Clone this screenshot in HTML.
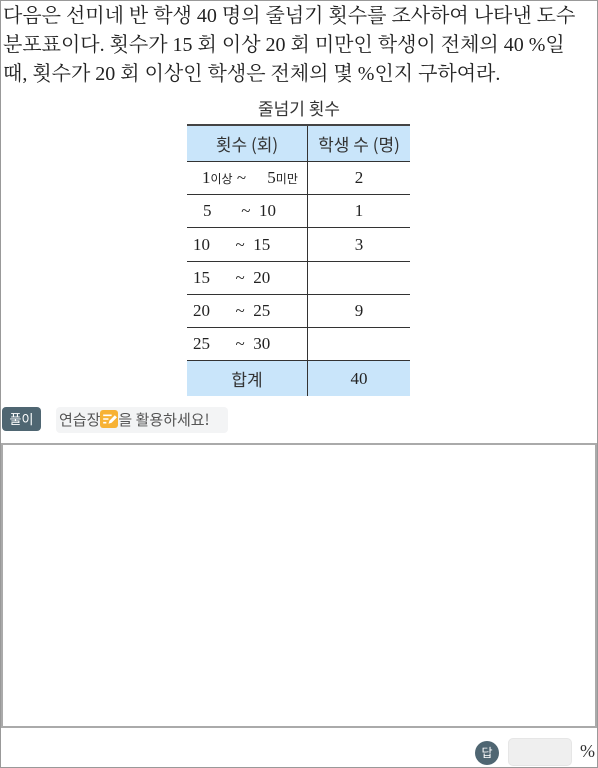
<!DOCTYPE html>
<html><head><meta charset="utf-8"><style>
*{margin:0;padding:0;box-sizing:border-box}
body{width:598px;height:768px;position:relative;background:#fff;font-family:"Liberation Serif","Noto Serif CJK SC","Noto Sans CJK KR",serif;color:#222;overflow:hidden}
.frame{position:absolute;left:0;top:0;width:598px;height:768px;border:1px solid #999}
.q{position:absolute;left:3px;top:2px;font-size:20px;line-height:29px;white-space:nowrap;letter-spacing:0px}
.cap{position:absolute;left:0;width:598px;top:95px;text-align:center;font-size:17px;font-family:"Noto Sans CJK KR",sans-serif;color:#333}
.t{position:absolute;left:187px;top:124px;width:223px;height:272px;border-top:2px solid #444;border-bottom:2px solid #444}
.r{position:absolute;left:0;width:223px;border-bottom:1px solid #333;font-size:17px}
.c1,.c2{position:absolute;top:0;height:100%;display:flex;align-items:center}
.c1{left:0;width:121px;border-right:1px solid #333}
.c2{left:121px;width:102px;justify-content:center}
.blue{background:#c9e5fa}
.k{font-family:"Noto Sans CJK KR",sans-serif;color:#333}
sup{font-family:"Noto Sans CJK KR",sans-serif;font-size:12px;vertical-align:6px}
.tag{position:absolute;left:2px;top:407px;width:39px;height:24px;background:#4f6672;color:#fff;border-radius:4px;font:13px "Noto Sans CJK KR",sans-serif;text-align:center;line-height:24px}
.tip{position:absolute;left:56px;top:407px;width:172px;height:26px;background:#f3f4f5;border-radius:4px;font:15px "Noto Sans CJK KR",sans-serif;color:#555;line-height:26px;padding-left:3px;white-space:nowrap}
.ic{display:inline-block;width:18px;height:18px;background:#f7b235;border-radius:3px;vertical-align:-3px;position:relative}
.box{position:absolute;left:1px;top:443px;width:596px;height:285px;border:2px solid #aaa}
.ans{position:absolute;left:475px;top:741px;width:24px;height:24px;border-radius:50%;background:#4f6672;color:#fff;font:12px "Noto Sans CJK KR",sans-serif;text-align:center;line-height:24px}
.ab{position:absolute;left:508px;top:738px;width:64px;height:28px;background:#efefef;border:1px solid #e6e6e6;border-radius:5px}
.pc{position:absolute;left:580px;top:741px;font-size:18px;color:#333}
</style></head><body>
<div class="frame"></div>
<div class="q">다음은 선미네 반 학생 40 명의 줄넘기 횟수를 조사하여 나타낸 도수<br>분포표이다. 횟수가 15 회 이상 20 회 미만인 학생이 전체의 40 %일<br>때, 횟수가 20 회 이상인 학생은 전체의 몇 %인지 구하여라.</div>
<div class="cap">줄넘기 횟수</div>
<div class="t">
 <div class="r blue" style="top:0;height:36px"><div class="c1 k" style="justify-content:center">횟수 (회)</div><div class="c2 k">학생 수 (명)</div></div>
 <div class="r" style="top:36px;height:33px"><div class="c1" style="padding-left:15px">1<sup>이상</sup>&nbsp;~&nbsp;&nbsp;&nbsp;&nbsp;&nbsp;5<sup>미만</sup></div><div class="c2">2</div></div>
 <div class="r" style="top:69px;height:33px"><div class="c1" style="padding-left:16px">5&nbsp;&nbsp;&nbsp;&nbsp;&nbsp;&nbsp;&nbsp;~&nbsp;&nbsp;10</div><div class="c2">1</div></div>
 <div class="r" style="top:102px;height:34px"><div class="c1" style="padding-left:6px">10&nbsp;&nbsp;&nbsp;&nbsp;&nbsp;&nbsp;~&nbsp;&nbsp;15</div><div class="c2">3</div></div>
 <div class="r" style="top:136px;height:33px"><div class="c1" style="padding-left:6px">15&nbsp;&nbsp;&nbsp;&nbsp;&nbsp;&nbsp;~&nbsp;&nbsp;20</div><div class="c2"></div></div>
 <div class="r" style="top:169px;height:33px"><div class="c1" style="padding-left:6px">20&nbsp;&nbsp;&nbsp;&nbsp;&nbsp;&nbsp;~&nbsp;&nbsp;25</div><div class="c2">9</div></div>
 <div class="r" style="top:202px;height:33px"><div class="c1" style="padding-left:6px">25&nbsp;&nbsp;&nbsp;&nbsp;&nbsp;&nbsp;~&nbsp;&nbsp;30</div><div class="c2"></div></div>
 <div class="r blue" style="top:235px;height:35px;border-bottom:none"><div class="c1 k" style="justify-content:center">합계</div><div class="c2">40</div></div>
</div>
<div class="tag">풀이</div>
<div class="tip">연습장<span class="ic"><svg width="18" height="18" viewBox="0 0 17 17"><path d="M3 5h8M3 8.5h5M3 12h3" stroke="#fff" stroke-width="1.5"/><path d="M8 13l1-3 5-5 2 2-5 5z" fill="#fff"/></svg></span>을 활용하세요!</div>
<div class="box"></div>
<div class="ans">답</div>
<div class="ab"></div>
<div class="pc">%</div>
</body></html>
